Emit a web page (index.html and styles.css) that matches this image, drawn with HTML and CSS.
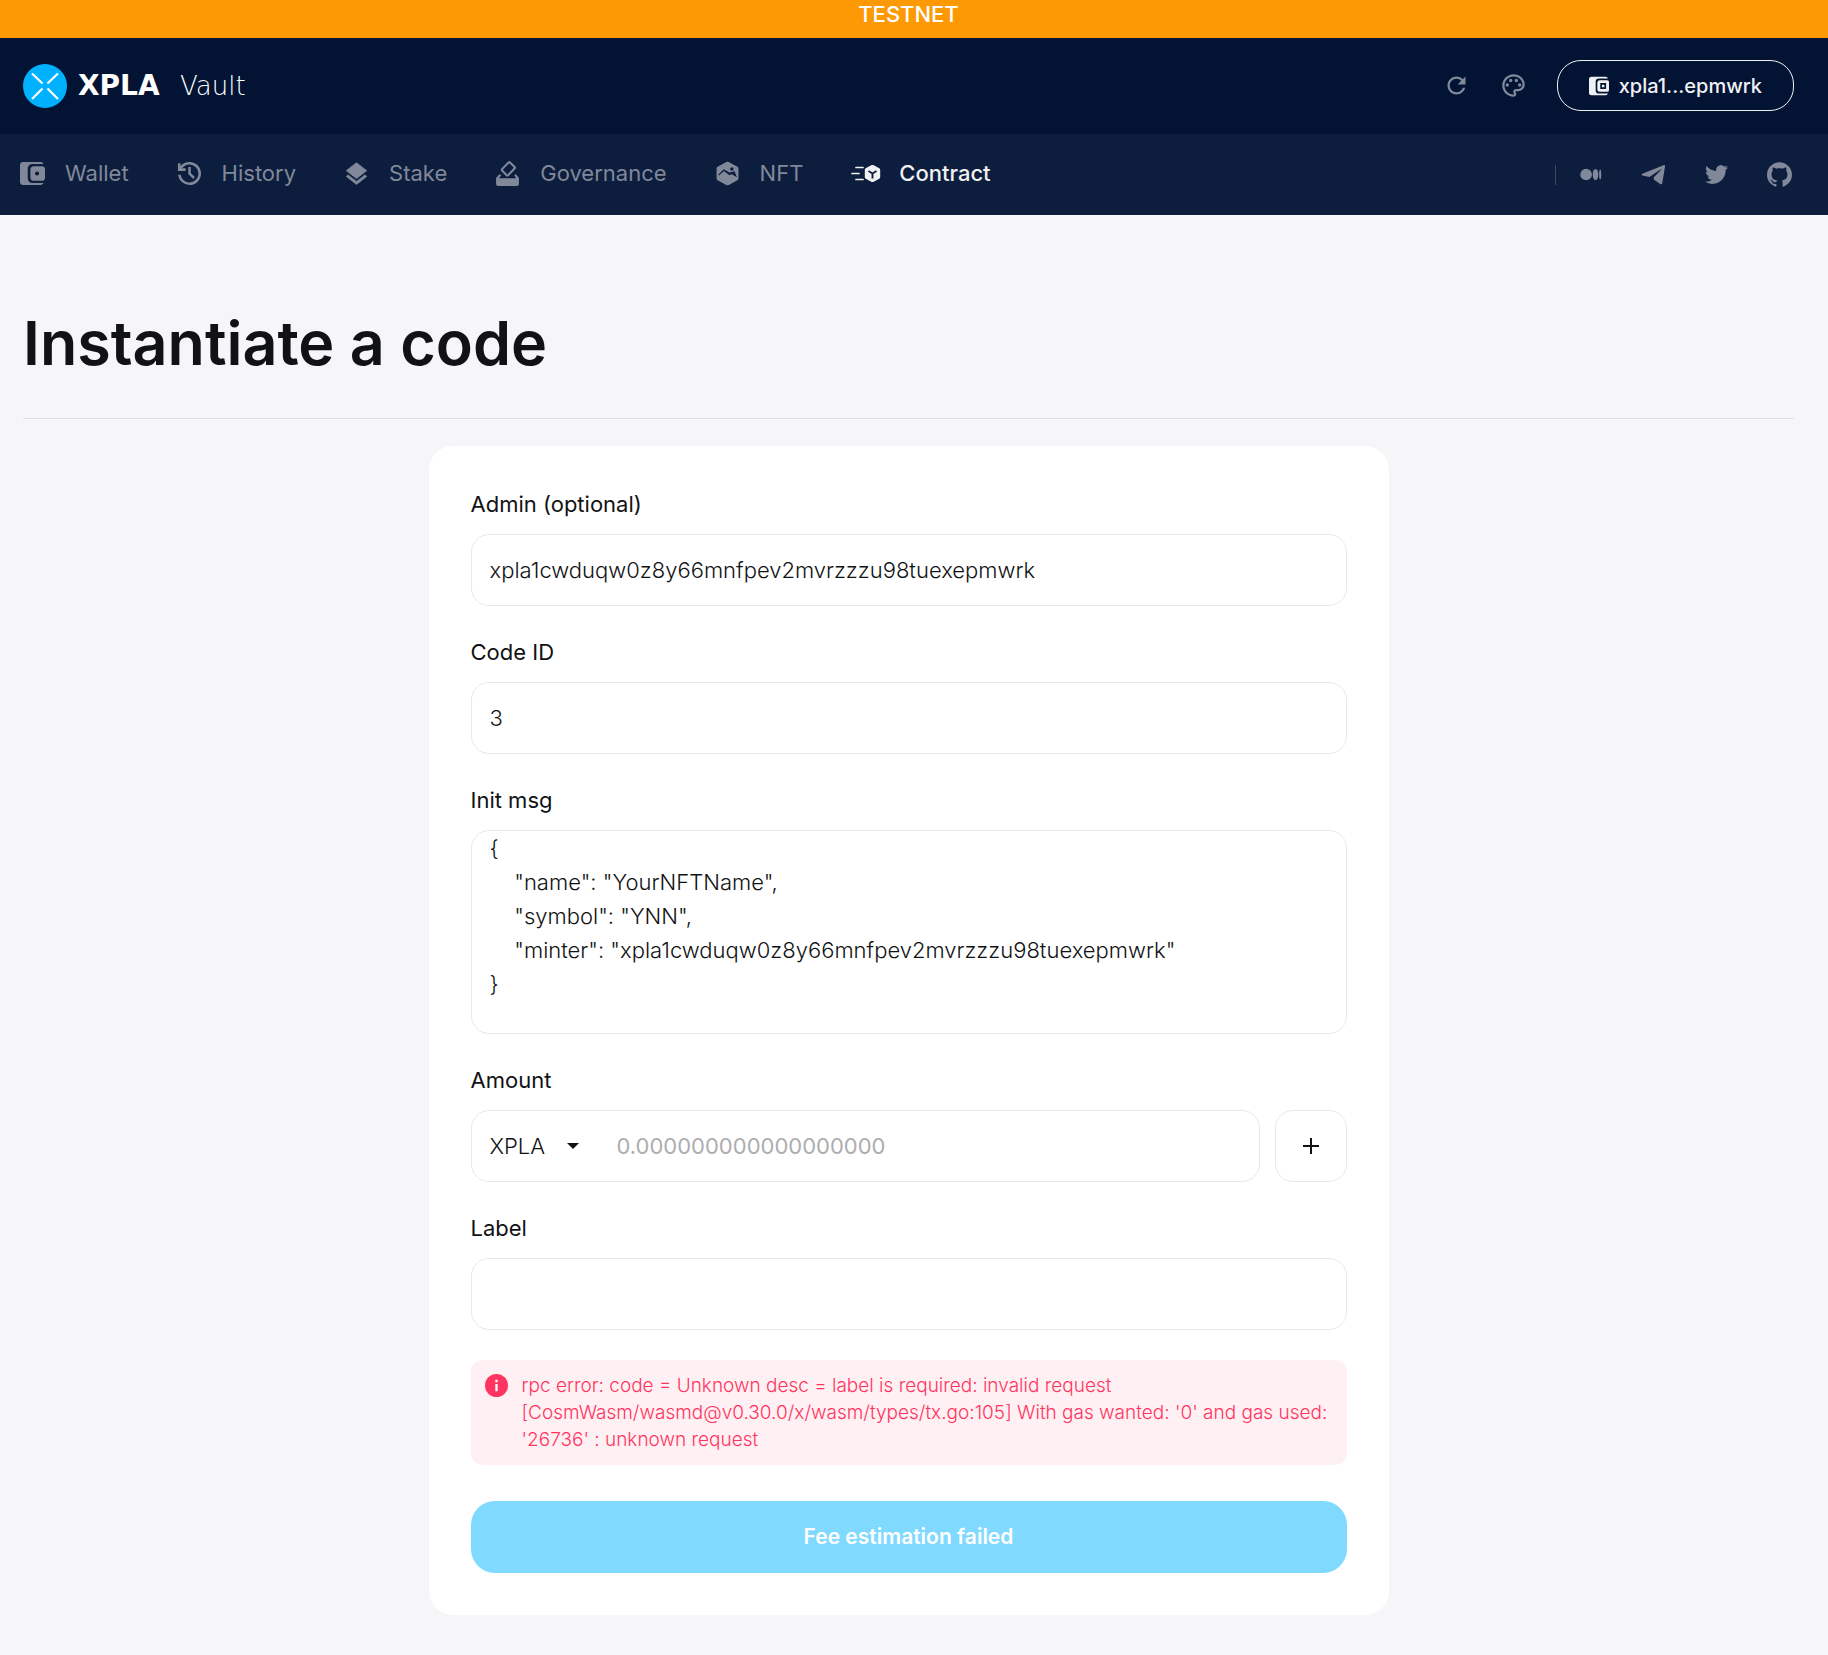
FILE: index.html
```html
<!DOCTYPE html>
<html lang="en">
<head>
<meta charset="utf-8">
<meta name="viewport" content="width=device-width, initial-scale=1">
<title>XPLA Vault</title>
<link rel="stylesheet" href="styles.css">
</head>
<body>
<div class="banner">TESTNET</div>

<header class="header">
  <a class="logo" href="#">
    <svg class="logo-mark" viewBox="0 0 44 44" aria-hidden="true">
      <circle cx="22" cy="22" r="22" fill="#00b1ff"/>
      <path d="M9 9.500L19.500 19.500M35 9.500L24.500 19.500M9 35L19.500 24.500M35 35L24.500 24.500" stroke="#fff" stroke-width="2.200" fill="none"/>
    </svg>
    <span class="logo-name">XPLA</span>
    <span class="logo-product">Vault</span>
  </a>
  <div class="actions">
    <button class="icon-button" type="button" aria-label="Refresh">
      <svg class="icon" viewBox="0 0 24 24"><path d="M17.650 6.350C16.200 4.900 14.210 4 12 4c-4.420 0-7.990 3.580-7.990 8s3.570 8 7.990 8c3.730 0 6.840-2.550 7.730-6h-2.080c-.82 2.330-3.040 4-5.650 4-3.310 0-6-2.690-6-6s2.690-6 6-6c1.660 0 3.140.69 4.220 1.780L13 11h7V4l-2.350 2.350z"/></svg>
    </button>
    <button class="icon-button" type="button" aria-label="Theme">
      <svg class="icon" viewBox="0 0 24 24"><path d="M12 22C6.490 22 2 17.510 2 12S6.490 2 12 2s10 4.040 10 9c0 3.310-2.690 6-6 6h-1.770c-.28 0-.5.22-.5.5 0 .12.05.23.13.33.41.47.64 1.060.64 1.670 0 1.380-1.120 2.500-2.500 2.500zm0-18c-4.410 0-8 3.590-8 8s3.590 8 8 8c.28 0 .5-.22.5-.5 0-.16-.08-.28-.14-.35-.41-.46-.63-1.050-.63-1.650 0-1.380 1.120-2.500 2.500-2.500H16c2.210 0 4-1.790 4-4 0-3.860-3.590-7-8-7z"/><circle cx="6.500" cy="11.500" r="1.500"/><circle cx="9.500" cy="7.500" r="1.500"/><circle cx="14.500" cy="7.500" r="1.500"/><circle cx="17.500" cy="11.500" r="1.500"/></svg>
    </button>
    <button class="account" type="button">
      <svg class="account-icon" viewBox="0 0 24 24"><path fill-rule="evenodd" d="M3 1h17a3 3 0 0 1 2.800 2H12a4 4 0 0 0-4 4v10a4 4 0 0 0 4 4h10.800A3 3 0 0 1 20 23H3a3 3 0 0 1-3-3V4a3 3 0 0 1 3-3zM13 5h9a2 2 0 0 1 2 2v10a2 2 0 0 1-2 2h-9a3 3 0 0 1-3-3V8a3 3 0 0 1 3-3zm.5 3.500v7h7v-7zM15.500 10.500h3v3h-3z"/></svg>
      xpla1...epmwrk
    </button>
  </div>
</header>

<div class="navbar">
  <nav class="menu">
    <a class="menu-item" href="#">
      <svg class="icon" viewBox="0 0 24 24"><path fill-rule="evenodd" d="M3 1h17a3 3 0 0 1 2.600 1.800H12a4.600 4.600 0 0 0-4.600 4.600v9.200a4.600 4.600 0 0 0 4.600 4.600h10.600A3 3 0 0 1 20 23H3a3 3 0 0 1-3-3V4a3 3 0 0 1 3-3zM13.500 5H21a3 3 0 0 1 3 3v8a3 3 0 0 1-3 3h-7.500a3.500 3.500 0 0 1-3.500-3.500v-7A3.500 3.500 0 0 1 13.500 5zm2.900 5a2 2 0 1 0 0 4 2 2 0 0 0 0-4z"/></svg>
      Wallet</a>
    <a class="menu-item" href="#">
      <svg class="icon" viewBox="90 -870 780 780"><path d="M480-120q-138 0-240.500-91.500T122-440h82q14 104 92.500 172T480-200q117 0 198.500-81.500T760-480q0-117-81.500-198.500T480-760q-69 0-129 32t-101 88h110v80H120v-240h80v94q51-64 124.500-99T480-840q75 0 140.500 28.500t114 77q48.500 48.500 77 114T840-480q0 75-28.500 140.500t-77 114q-48.500 48.500-114 77T480-120Zm112-192L440-464v-216h80v184l128 128-56 56Z"/></svg>
      History</a>
    <a class="menu-item" href="#">
      <svg class="icon" viewBox="1 .5 22 22"><path d="M12 18.500l-7.400-5.700L3 14.070l9 7 9-7-1.600-1.270z M12 16l7.360-5.730L21 9l-9-7-9 7 1.630 1.270z" stroke="currentColor" stroke-width=".7" stroke-linejoin="round"/></svg>
      Stake</a>
    <a class="menu-item" href="#">
      <svg class="icon" viewBox="0 0 24 24"><path d="M1 17a2 2 0 0 1 .6-1.400L4.500 12.500 6 14l-2.300 2.500h16.600L18.500 14l1.300-1.500 2.700 3.100A2 2 0 0 1 23 17v5a2 2 0 0 1-2 2H3a2 2 0 0 1-2-2z"/><path d="M13 1.400l-6.200 6.400a1 1 0 0 0 0 1.400l4.400 4.400a1 1 0 0 0 1.400 0l6.200-6.400a1 1 0 0 0 0-1.400L14.400 1.400a1 1 0 0 0-1.400 0z" fill="none" stroke="currentColor" stroke-width="2"/></svg>
      Governance</a>
    <a class="menu-item" href="#">
      <svg class="icon" viewBox="0 0 24 24"><path d="M13.200 1l8.300 4.500a2 2 0 0 1 1 1.700v9.600a2 2 0 0 1-1 1.700l-8.300 4.500a2.400 2.400 0 0 1-2.400 0l-8.300-4.500a2 2 0 0 1-1-1.700V7.200a2 2 0 0 1 1-1.700L10.800 1a2.400 2.400 0 0 1 2.400 0z"/><path d="M3.500 13.500L8.500 9l5.500 4 2-1 4 2.500-1.500-4L16 11l-2 .8L8.500 8.500z" fill="#0d1d3d" stroke="#0d1d3d" stroke-width="1"/><circle cx="16.200" cy="7.600" r="1.700" fill="#0d1d3d"/></svg>
      NFT</a>
    <a class="menu-item menu-item-active" href="#">
      <svg class="icon icon-wide" viewBox="0 0 30 24"><path d="M5 6h7M1 12h7M5 18h7" stroke="currentColor" stroke-width="1.700" stroke-linecap="round"/><path d="M22.300 3.600l6 3.200a1.800 1.800 0 0 1 .9 1.600v7.200a1.800 1.800 0 0 1-.9 1.600l-6 3.200a1.900 1.900 0 0 1-1.600 0l-6-3.200a1.800 1.800 0 0 1-.9-1.600V8.400a1.800 1.800 0 0 1 .9-1.600l6-3.200a1.900 1.900 0 0 1 1.600 0z"/><path d="M17.500 9.500l4 2.500 4-2.500M21.500 12v5" fill="none" stroke="#0d1d3d" stroke-width="1.900"/></svg>
      Contract</a>
  </nav>
  <div class="social">
    <a class="social-link" href="#" aria-label="Medium"><svg class="icon" viewBox="0 0 24 24"><ellipse cx="7.800" cy="12" rx="5.600" ry="5.600"/><ellipse cx="16.800" cy="12" rx="2.700" ry="5.400"/><ellipse cx="21.300" cy="12" rx="1" ry="4.800"/></svg></a>
    <a class="social-link" href="#" aria-label="Telegram"><svg class="icon" viewBox="0 0 24 24"><path d="M1.200 11.200L21.600 3c1-.4 1.700.2 1.500 1.400l-2.700 15.700c-.2 1.300-1 1.600-2 1L12.500 17l-.4-2.200L19.400 7.400c.4-.4-.1-.6-.6-.3L8 14.300 1.500 13c-1-.3-1.200-1.300-.3-1.800z"/></svg></a>
    <a class="social-link" href="#" aria-label="Twitter"><svg class="icon" viewBox="-1 -1 26 26"><path d="M23.953 4.570a10 10 0 0 1-2.825.775 4.958 4.958 0 0 0 2.163-2.723c-.951.555-2.005.959-3.127 1.184a4.920 4.920 0 0 0-8.384 4.482C7.690 8.095 4.067 6.130 1.640 3.162a4.822 4.822 0 0 0-.666 2.475c0 1.710.87 3.213 2.188 4.096a4.904 4.904 0 0 1-2.228-.616v.06a4.923 4.923 0 0 0 3.946 4.827 4.996 4.996 0 0 1-2.212.085 4.936 4.936 0 0 0 4.604 3.417 9.867 9.867 0 0 1-6.102 2.105c-.39 0-.779-.023-1.170-.067a13.995 13.995 0 0 0 7.557 2.209c9.053 0 13.998-7.496 13.998-13.985 0-.21 0-.42-.015-.63A9.935 9.935 0 0 0 24 4.590z"/></svg></a>
    <a class="social-link" href="#" aria-label="GitHub"><svg class="icon" viewBox="0 0 24 24"><path d="M12 .297c-6.630 0-12 5.373-12 12 0 5.303 3.438 9.800 8.205 11.385.6.113.82-.258.82-.577 0-.285-.01-1.040-.015-2.040-3.338.724-4.042-1.610-4.042-1.610C4.422 18.070 3.633 17.700 3.633 17.700c-1.087-.744.084-.729.084-.729 1.205.084 1.838 1.236 1.838 1.236 1.070 1.835 2.809 1.305 3.495.998.108-.776.417-1.305.76-1.605-2.665-.3-5.466-1.332-5.466-5.930 0-1.310.465-2.380 1.235-3.220-.135-.303-.54-1.523.105-3.176 0 0 1.005-.322 3.300 1.230.96-.267 1.980-.399 3-.405 1.020.006 2.040.138 3 .405 2.280-1.552 3.285-1.230 3.285-1.230.645 1.653.24 2.873.12 3.176.765.84 1.230 1.910 1.230 3.220 0 4.610-2.805 5.625-5.475 5.920.42.36.81 1.096.81 2.220 0 1.606-.015 2.896-.015 3.286 0 .315.21.69.825.57C20.565 22.092 24 17.592 24 12.297c0-6.627-5.373-12-12-12"/></svg></a>
  </div>
</div>

<main class="page">
  <h1 class="title">Instantiate a code</h1>
  <form class="card">
    <div class="field">
      <label class="label" for="admin">Admin (optional)</label>
      <input class="control" id="admin" type="text" value="xpla1cwduqw0z8y66mnfpev2mvrzzzu98tuexepmwrk">
    </div>
    <div class="field">
      <label class="label" for="code-id">Code ID</label>
      <input class="control" id="code-id" type="text" value="3">
    </div>
    <div class="field">
      <label class="label" for="init-msg">Init msg</label>
      <textarea class="control control-area" id="init-msg" rows="6" spellcheck="false">{
    "name": "YourNFTName",
    "symbol": "YNN",
    "minter": "xpla1cwduqw0z8y66mnfpev2mvrzzzu98tuexepmwrk"
}</textarea>
    </div>
    <div class="field">
      <label class="label" for="amount">Amount</label>
      <div class="amount">
        <div class="control amount-group">
          <div class="token">
            <select class="token-select" aria-label="Token"><option>XPLA</option></select>
            <svg class="token-arrow" viewBox="0 0 12 6" aria-hidden="true"><path d="M0 0h12L6 6z"/></svg>
          </div>
          <input class="amount-input" id="amount" type="text" placeholder="0.000000000000000000">
        </div>
        <button class="add" type="button" aria-label="Add">
          <svg class="add-icon" viewBox="0 0 16 16"><path d="M8 0v16M0 8h16" stroke="currentColor" stroke-width="2"/></svg>
        </button>
      </div>
    </div>
    <div class="field">
      <label class="label" for="label">Label</label>
      <input class="control" id="label" type="text">
    </div>
    <div class="error" role="alert">
      <svg class="error-icon" viewBox="0 0 24 24" aria-hidden="true"><circle cx="12" cy="12" r="12" fill="#ff3561"/><path d="M12 10.500V18M12 6v2.500" stroke="#fff" stroke-width="2.400"/></svg>
      <p class="error-text">rpc error: code = Unknown desc = label is required: invalid request [CosmWasm/wasmd@v0.30.0/x/wasm/types/tx.go:105] With gas wanted: '0' and gas used: '26736' : unknown request</p>
    </div>
    <button class="submit" type="submit" disabled>Fee estimation failed</button>
  </form>
</main>
</body>
</html>
```

FILE: styles.css
```css
* {
  box-sizing: border-box;
}

body {
  margin: 0;
  background: #f6f6f9;
  color: #111214;
  font-family: Inter, "Liberation Sans", sans-serif;
  font-size: 22px;
  line-height: 34px;
}

button,
input,
select,
textarea {
  font: inherit;
  color: inherit;
}

a {
  color: inherit;
  text-decoration: none;
}

svg {
  display: block;
  flex: none;
  fill: currentColor;
}

.banner {
  height: 38px;
  padding-right: 11px;
  background: #fd9905;
  color: #fff;
  font-weight: 500;
  line-height: 28px;
  text-align: center;
}

.header {
  display: flex;
  align-items: center;
  justify-content: space-between;
  height: 96px;
  padding: 0 34px 1px 23px;
  background: #021333;
  color: #f0f1f3;
}

.logo {
  display: flex;
  align-items: center;
  color: #fff;
}

.logo-mark {
  width: 44px;
  height: 44px;
  margin-right: 11px;
}

.logo-name {
  min-width: 94px;
  font-family: "DejaVu Sans", sans-serif;
  font-size: 28px;
  font-weight: 700;
}

.logo-product {
  margin-left: 8px;
  font-family: "DejaVu Sans Light", "DejaVu Sans", sans-serif;
  font-size: 26px;
  font-weight: 200;
}

.actions {
  display: flex;
  align-items: center;
  gap: 30px;
}

.icon-button {
  padding: 0;
  border: 0;
  background: none;
  color: #80889a;
}

.icon {
  width: 25px;
  height: 25px;
}

.icon-button .icon {
  width: 27px;
  height: 27px;
}

.icon-wide {
  width: 30px;
}

.account {
  display: flex;
  align-items: center;
  gap: 10px;
  height: 51px;
  padding: 0 31px;
  border: 1px solid #f0f1f3;
  border-radius: 24px;
  background: none;
  font-size: 20px;
  font-weight: 500;
}

.account-icon {
  width: 20px;
  height: 20px;
}

.navbar {
  display: flex;
  align-items: center;
  justify-content: space-between;
  height: 81px;
  padding: 0 36px 0 20px;
  background: #0d1d3d;
  color: #80889a;
}

.menu {
  display: flex;
  gap: 48px;
  padding-bottom: 3px;
}

.menu-item {
  display: flex;
  align-items: center;
  gap: 20px;
}

.menu-item-active {
  gap: 18px;
  color: #f0f1f3;
  font-weight: 500;
}

.social {
  display: flex;
  align-items: center;
  gap: 38px;
  padding-left: 23px;
  background: linear-gradient(#3d4a64, #3d4a64) left center / 1px 20px no-repeat;
}

.page {
  padding: 83px 34px 40px 23px;
}

.title {
  margin: 0 0 27px;
  padding-bottom: 29px;
  border-bottom: 1px solid #e0e0e3;
  font-size: 61px;
  font-weight: 600;
  line-height: 91px;
}

.card {
  max-width: 960px;
  margin: 0 auto;
  padding: 41px 42px 42px;
  border-radius: 24px;
  background: #fff;
}

.field {
  margin-bottom: 29px;
}

.label {
  display: block;
  margin-bottom: 13px;
}

.control {
  display: block;
  width: 100%;
  height: 72px;
  padding: 0 18px;
  border: 1px solid #e8e8ea;
  border-radius: 18px;
  background: #fff;
  font-weight: 300;
}

.control-area {
  height: 204px;
  padding-top: 0;
  line-height: 34px;
  resize: none;
  overflow: hidden;
}

.amount {
  display: flex;
  gap: 15px;
}

.amount-group {
  display: flex;
  flex: 1;
  align-items: center;
  gap: 32px;
}

.token {
  display: grid;
  align-items: center;
  width: 95px;
}

.token-select {
  grid-area: 1 / 1;
  width: 100%;
  padding: 0;
  border: 0;
  background: none;
  appearance: none;
}

.token-arrow {
  grid-area: 1 / 1;
  justify-self: end;
  width: 12px;
  height: 6px;
  margin-right: 6px;
  pointer-events: none;
}

.amount-input {
  flex: 1;
  min-width: 0;
  padding: 0;
  border: 0;
  background: none;
  font-weight: 400;
}

.amount-input::placeholder {
  color: #adadaf;
  opacity: 1;
}

.add {
  display: grid;
  place-items: center;
  width: 72px;
  height: 72px;
  padding: 0;
  border: 1px solid #e8e8ea;
  border-radius: 18px;
  background: #fff;
}

.add-icon {
  width: 16px;
  height: 16px;
}

.error {
  display: flex;
  gap: 14px;
  margin: 30px 0 36px;
  padding: 12px 14px;
  border-radius: 12px;
  background: #fff0f3;
  color: #ff3561;
}

.error-icon {
  width: 23px;
  height: 23px;
  margin-top: 2px;
}

.error-text {
  margin: 0;
  font-size: 19px;
  font-weight: 300;
  line-height: 27px;
}

.submit {
  display: block;
  width: 100%;
  height: 72px;
  border: 0;
  border-radius: 24px;
  background: #80d9ff;
  color: #fff;
  font-size: 21px;
  font-weight: 600;
}
```
